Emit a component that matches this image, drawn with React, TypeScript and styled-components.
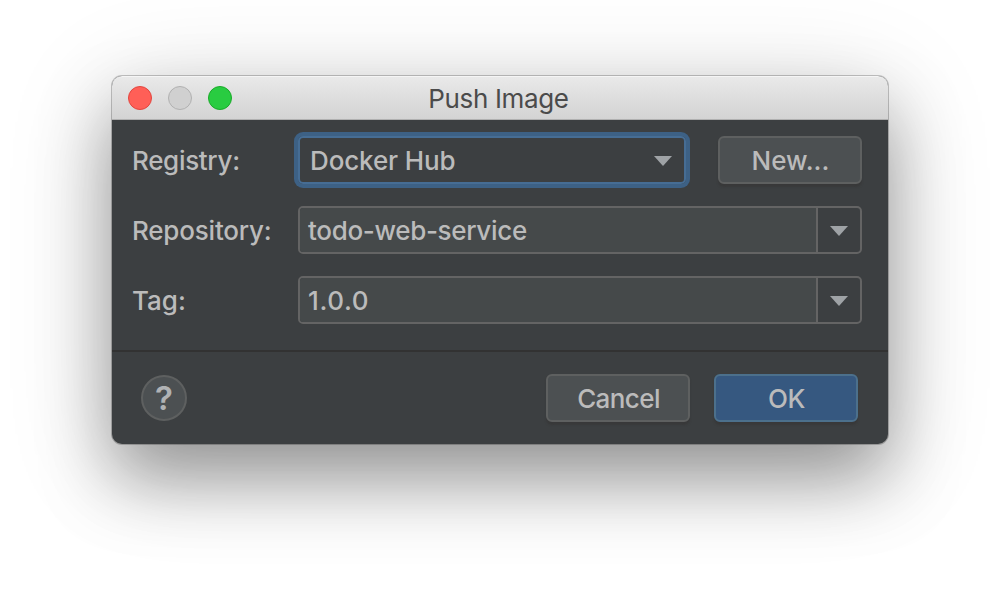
import React from 'react';
import styled, { createGlobalStyle } from 'styled-components';

const GlobalStyle = createGlobalStyle`
  body {
    margin: 0;
    background: #fff;
    font-family: Inter, "Liberation Sans", sans-serif;
  }
`;

const Desktop = styled.main`
  box-sizing: border-box;
  width: 1000px;
  height: 592px;
  padding: 76px 112px;
  overflow: hidden;
`;

const Dialog = styled.section`
  display: flex;
  flex-direction: column;
  width: 776px;
  height: 368px;
  border-radius: 10px;
  background: #3c3f41;
  color: #bbb;
  font-size: 26px;
  font-weight: 450;
  line-height: 32px;
  box-shadow: 0 0 0 1px rgba(0, 0, 0, 0.22), 0 36px 70px rgba(0, 0, 0, 0.34),
    0 18px 110px rgba(0, 0, 0, 0.16);
`;

const TitleBar = styled.header`
  box-sizing: border-box;
  display: grid;
  grid-template-columns: 104px 1fr 104px;
  align-items: center;
  height: 44px;
  padding: 0 16px;
  border-radius: 10px 10px 0 0;
  border-top: 1px solid #f5f5f5;
  border-bottom: 1px solid #b0b0b0;
  background: linear-gradient(#e9e9e9, #d3d3d3);
`;

const Lights = styled.div`
  display: flex;
  gap: 16px;
`;

const Light = styled.i<{ $fill: string; $edge: string }>`
  box-sizing: border-box;
  width: 24px;
  height: 24px;
  border: 1px solid ${(p) => p.$edge};
  border-radius: 50%;
  background: ${(p) => p.$fill};
`;

const Text = styled.span<{ $spacing?: number }>`
  letter-spacing: ${(p) => p.$spacing ?? 0}px;
  white-space: nowrap;
`;

const Title = styled.h1`
  margin: 0;
  padding: 2px 3px 0 0;
  color: #4b4b4b;
  font-size: 26px;
  font-weight: 400;
  line-height: 32px;
  text-align: center;
`;

const Form = styled.div`
  box-sizing: border-box;
  display: flex;
  flex-direction: column;
  gap: 22px;
  height: 230px;
  padding: 16px 26px 0 20px;
`;

const Row = styled.div`
  display: flex;
  align-items: center;
  height: 48px;
`;

const Label = styled.label`
  width: 166px;
  flex: none;
  padding-top: 2px;
`;

const Select = styled.div`
  box-sizing: border-box;
  display: flex;
  align-items: center;
  justify-content: space-between;
  width: 388px;
  height: 48px;
  margin-right: 32px;
  padding: 2px 12px 0 10px;
  border: 2px solid #466d94;
  border-radius: 5px;
  box-shadow: 0 0 0 4px #3d6185;
`;

const Combo = styled.div`
  box-sizing: border-box;
  display: flex;
  width: 564px;
  height: 48px;
  border: 2px solid #646464;
  border-radius: 5px;
`;

const ComboValue = styled.div`
  flex: 1;
  padding: 7px 8px 0;
  background: #45494a;
  border-radius: 3px 0 0 3px;
`;

const ComboToggle = styled.div`
  display: flex;
  align-items: center;
  justify-content: center;
  width: 42px;
  border-left: 2px solid #646464;
  padding-top: 2px;
`;

const Button = styled.button<{ $primary?: boolean }>`
  box-sizing: border-box;
  width: 144px;
  height: 48px;
  padding: 2px 0 0 1px;
  border: 2px solid ${(p) => (p.$primary ? '#4c708c' : '#5e6060')};
  border-radius: 6px;
  background: ${(p) => (p.$primary ? '#365880' : '#4c5052')};
  box-shadow: 0 3px 2px rgba(54, 54, 54, 0.7);
  color: #bbb;
  font: inherit;
`;

const Footer = styled.footer`
  box-sizing: border-box;
  display: flex;
  align-items: center;
  gap: 24px;
  height: 94px;
  padding: 0 30px 0 29px;
  border-top: 2px solid #323232;
`;

const Help = styled.button`
  box-sizing: border-box;
  width: 46px;
  height: 46px;
  margin-right: auto;
  padding: 0;
  border: 2px solid #5e6060;
  border-radius: 50%;
  background: #4c5052;
  color: #b0b2b4;
  font: 600 33px/43px Inter, sans-serif;
`;

const Arrow = () => (
  <svg width="18" height="10" viewBox="0 0 18 10" aria-hidden="true">
    <path d="M0 0h18L9 10z" fill="#9fa3a6" />
  </svg>
);

const ComboBox = ({ value, spacing }: { value: string; spacing: number }) => (
  <Combo>
    <ComboValue>
      <Text $spacing={spacing}>{value}</Text>
    </ComboValue>
    <ComboToggle>
      <Arrow />
    </ComboToggle>
  </Combo>
);

export default function App() {
  return (
    <>
      <GlobalStyle />
      <Desktop>
        <Dialog>
          <TitleBar>
            <Lights>
              <Light $fill="#ff5f57" $edge="#e2463f" />
              <Light $fill="#d0d0d0" $edge="#b1b1b1" />
              <Light $fill="#29cc41" $edge="#1aab29" />
            </Lights>
            <Title>
              <Text $spacing={-0.35}>Push Image</Text>
            </Title>
          </TitleBar>
          <Form>
            <Row>
              <Label>
                <Text $spacing={-0.32}>Registry:</Text>
              </Label>
              <Select>
                <Text $spacing={-0.12}>Docker Hub</Text>
                <Arrow />
              </Select>
              <Button>
                <Text>New...</Text>
              </Button>
            </Row>
            <Row>
              <Label>
                <Text $spacing={-0.2}>Repository:</Text>
              </Label>
              <ComboBox value="todo-web-service" spacing={-0.33} />
            </Row>
            <Row>
              <Label>
                <Text>Tag:</Text>
              </Label>
              <ComboBox value="1.0.0" spacing={0.65} />
            </Row>
          </Form>
          <Footer>
            <Help>?</Help>
            <Button>
              <Text $spacing={-0.6}>Cancel</Text>
            </Button>
            <Button $primary>
              <Text $spacing={-0.3}>OK</Text>
            </Button>
          </Footer>
        </Dialog>
      </Desktop>
    </>
  );
}
